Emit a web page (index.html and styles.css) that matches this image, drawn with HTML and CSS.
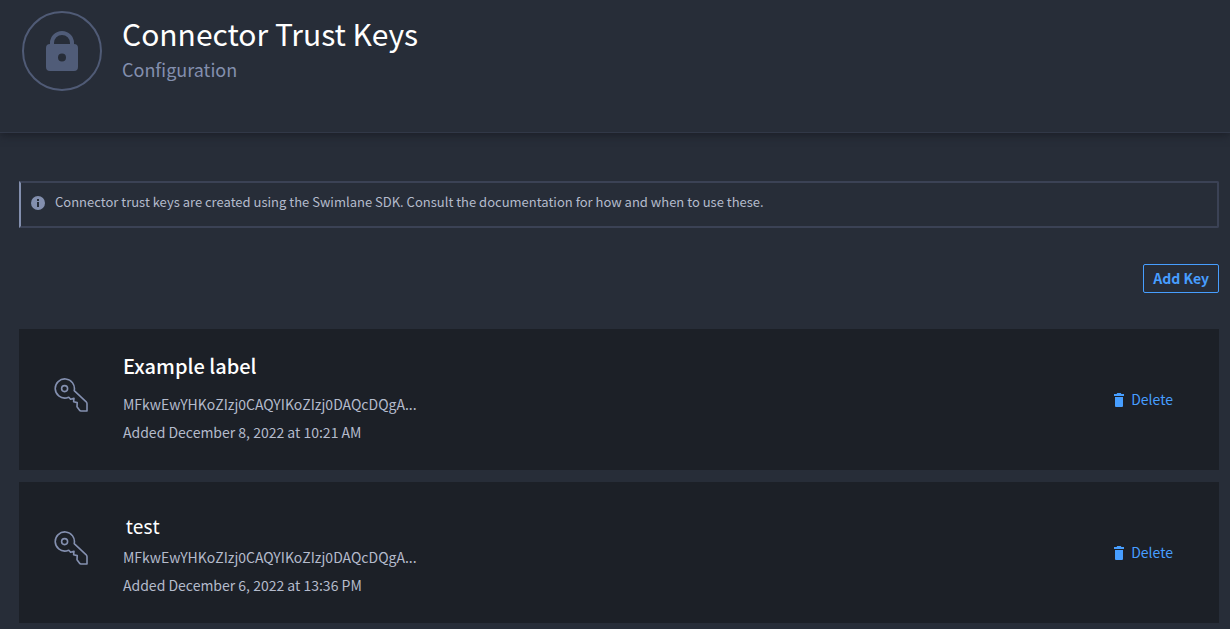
FILE: index.html
```html
<!DOCTYPE html>
<html lang="en">
<head>
<meta charset="utf-8">
<meta name="viewport" content="width=device-width, initial-scale=1">
<title>Connector Trust Keys</title>
<link rel="stylesheet" href="styles.css">
</head>
<body>
<svg class="sprite" aria-hidden="true">
  <symbol id="icon-key" viewBox="0 0 34 34">
    <g fill="none" stroke="currentColor" stroke-width="1.6" stroke-linejoin="round">
      <path d="M20.2 12.600A9.600 9.600 0 1 0 12.400 20L14.800 19.200L16.600 21.200L20 20.200L19.600 23.800L23.200 24.600L23 28.800L25.400 32Q26 33 27 33H33V25.800Q33 24.600 32.200 23.800L20.200 12.600Z"/>
      <circle cx="10.600" cy="10.600" r="3"/>
    </g>
  </symbol>
  <symbol id="icon-trash" viewBox="0 0 10 14">
    <path fill="currentColor" d="M3.2 0H6.8L7.4 1H10V3H0V1H2.6ZM1 4H9V13Q9 14 8 14H2Q1 14 1 13Z"/>
  </symbol>
</svg>
<header class="page-header">
  <div class="header-badge">
    <svg class="lock-icon" viewBox="0 0 32 40" aria-hidden="true">
      <path d="M6 15V12A10 10 0 0 1 26 12V15" fill="none" stroke="currentColor" stroke-width="4"/>
      <path fill="currentColor" fill-rule="evenodd" d="M4 13H28Q32 13 32 17V36Q32 40 28 40H4Q0 40 0 36V17Q0 13 4 13ZM16 22.500A4 4 0 1 0 16 30.500A4 4 0 1 0 16 22.500Z"/>
    </svg>
  </div>
  <div>
    <h1 class="page-title">Connector Trust Keys</h1>
    <p class="page-subtitle">Configuration</p>
  </div>
</header>
<main class="content">
  <div class="notice">
    <svg class="info-icon" viewBox="0 0 14 14" aria-hidden="true">
      <circle cx="7" cy="7" r="7" fill="#838fae"/>
      <path fill="#272d38" d="M6 3H8V5H6ZM6 6H8V11H6Z"/>
    </svg>
    <p class="notice-text">Connector trust keys are created using the Swimlane SDK. Consult the documentation for how and when to use these.</p>
  </div>
  <div class="toolbar"><button class="add-button" type="button">Add Key</button></div>
  <ul class="key-list">
    <li class="key-card">
      <svg class="key-icon" aria-hidden="true"><use href="#icon-key"/></svg>
      <div class="key-info">
        <h2 class="key-label">Example label</h2>
        <p class="key-text">MFkwEwYHKoZIzj0CAQYIKoZIzj0DAQcDQgA...</p>
        <p class="key-text">Added December 8, 2022 at 10:21 AM</p>
      </div>
      <button class="delete-button" type="button"><svg class="trash-icon" aria-hidden="true"><use href="#icon-trash"/></svg>Delete</button>
    </li>
    <li class="key-card">
      <svg class="key-icon" aria-hidden="true"><use href="#icon-key"/></svg>
      <div class="key-info">
        <h2 class="key-label key-label-plain">test</h2>
        <p class="key-text">MFkwEwYHKoZIzj0CAQYIKoZIzj0DAQcDQgA...</p>
        <p class="key-text">Added December 6, 2022 at 13:36 PM</p>
      </div>
      <button class="delete-button" type="button"><svg class="trash-icon" aria-hidden="true"><use href="#icon-trash"/></svg>Delete</button>
    </li>
  </ul>
</main>
</body>
</html>
```
FILE: styles.css
```css
* { box-sizing: border-box; }

body {
  margin: 0;
  background: #272d38;
  color: #b4bbcc;
  font-family: "Noto Sans CJK SC", "Noto Sans", sans-serif;
}

h1, h2, p, ul { margin: 0; padding: 0; }

button {
  background: none;
  color: #479eff;
  font-family: inherit;
  cursor: pointer;
}

.sprite { display: none; }

.page-header {
  display: flex;
  gap: 20px;
  padding: 11px 22px 41px;
  border-bottom: 1px solid #313847;
  box-shadow: 0 2px 8px #1b1e27;
}

.header-badge {
  display: grid;
  place-items: center;
  width: 80px;
  height: 80px;
  border: 2px solid #505b76;
  border-radius: 50%;
  color: #505c78;
}

.lock-icon { width: 32px; height: 40px; }

.page-title {
  color: #fff;
  font-size: 30px;
  font-weight: 400;
  line-height: 44px;
}

.page-subtitle {
  color: #838fae;
  font-size: 18px;
  line-height: 28px;
}

.content { padding: 48px 11px 6px 19px; }

.notice {
  display: flex;
  align-items: flex-start;
  gap: 10px;
  padding: 8px 10px 14px;
  border: 2px solid #3b4255;
  border-left-color: #838fae;
  border-radius: 0 2px 2px 0;
}

.info-icon { width: 14px; height: 14px; margin-top: 5px; }

.notice-text { font-size: 13px; line-height: 21px; }

.toolbar {
  display: flex;
  justify-content: flex-end;
  padding: 36px 0;
}

.add-button {
  padding: 0 9px;
  border: 1px solid #479eff;
  border-radius: 2px;
  font-size: 14px;
  font-weight: 700;
  line-height: 27px;
}

.key-list {
  display: grid;
  gap: 12px;
  list-style: none;
}

.key-card {
  display: flex;
  align-items: center;
  padding: 19px 46px 24px 35px;
  background: #1c2027;
}

.key-icon {
  width: 34px;
  height: 34px;
  margin-right: 35px;
  margin-top: -5px;
  color: #8490b0;
}

.key-info { flex: 1; }

.key-label {
  color: #fff;
  font-size: 20px;
  font-weight: 500;
  line-height: 36px;
  margin-bottom: 6px;
}

.key-label-plain {
  padding: 10px 0 0 3px;
  margin-bottom: 0;
  font-family: "Noto Sans", sans-serif;
  font-size: 19px;
  font-weight: 400;
  line-height: 32px;
}

.key-text { font-size: 14px; line-height: 28px; }

.delete-button {
  display: flex;
  align-items: center;
  gap: 7px;
  margin-top: 4px;
  padding: 0;
  border: 0;
  font-size: 14px;
  line-height: 24px;
}

.trash-icon { width: 10px; height: 14px; margin-top: 2px; }
```
